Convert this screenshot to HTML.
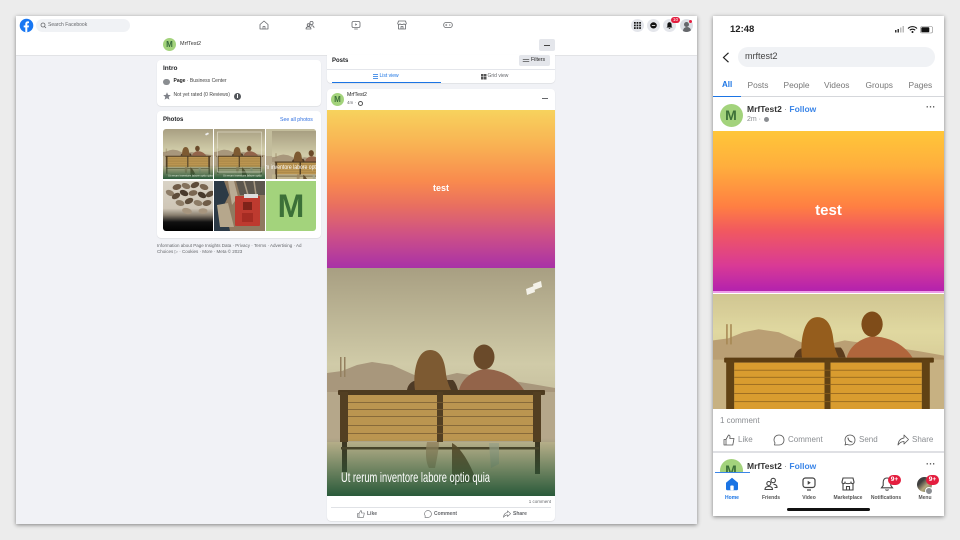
<!DOCTYPE html>
<html><head><meta charset="utf-8"><style>
html,body{margin:0;padding:0}
body{width:960px;height:540px;background:#ececec;position:relative;overflow:hidden;font-family:"Liberation Sans",sans-serif;color:#1c1e21}
#w{position:absolute;left:0;top:0;width:960px;height:540px;filter:blur(.3px)}
.a{position:absolute}
.t{position:absolute;white-space:nowrap;line-height:1}
.card{position:absolute;background:#fff;border-radius:4px;box-shadow:0 0.5px 1px rgba(0,0,0,.12)}
.c{position:absolute;border-radius:50%}
svg{position:absolute;display:block;overflow:visible}
.ic{fill:none;stroke:#65676b;stroke-width:1;stroke-linecap:round;stroke-linejoin:round}
.pic{stroke:#555;stroke-width:1.1}
.tab{position:absolute;white-space:nowrap;line-height:1;top:80.5px;font-size:8.4px;color:#777}
.act{position:absolute;white-space:nowrap;line-height:1;top:436px;font-size:8px;color:#8a8d91}
.dact{position:absolute;white-space:nowrap;line-height:1;top:511.5px;font-size:5px;color:#65676b;font-weight:bold}
.nav{position:absolute;width:40px;top:495.5px;font-size:5px;font-weight:bold;color:#555;text-align:center;line-height:1;white-space:nowrap}
</style></head><body><div id="w">
<svg width="0" height="0" style="position:absolute"><defs>
<linearGradient id="sky" x1="0" y1="0" x2="0" y2="1"><stop offset="0" stop-color="#a89f82"/><stop offset=".42" stop-color="#d0cba8"/><stop offset=".55" stop-color="#c8c1a0"/><stop offset="1" stop-color="#b3a67d"/></linearGradient>
<linearGradient id="grn" x1="0" y1="0" x2="0" y2="1"><stop offset="0" stop-color="#2a5a3a" stop-opacity="0"/><stop offset=".4" stop-color="#2a5a3a" stop-opacity=".4"/><stop offset="1" stop-color="#2a5a3a"/></linearGradient>
<symbol id="scene" viewBox="0 0 228 228" preserveAspectRatio="none">
<rect width="228" height="228" fill="url(#sky)"/>
<path d="M0 105L15 103L30 97L45 94L65 97L85 106L100 112L130 105L150 108L180 112L205 116L228 120V130H0Z" fill="#a8977c"/>
<rect x="13" y="89" width="1.5" height="20" fill="#94805f"/><rect x="17" y="89" width="1.5" height="20" fill="#94805f"/>
<rect y="124" width="228" height="50" fill="#b5a78a"/>
<rect y="174" width="228" height="54" fill="#c0b48e"/>
<path d="M80 122C81 116 85 113 90 112L126 112C129 115 130 119 131 122Z" fill="#4e3a26"/>
<path d="M88 122C86 110 88 82 103 82C115 82 118 95 119 106C120 113 122 118 124 122Z" fill="#7d5a32"/>
<path d="M132 122C135 110 146 103 157 101C172 101 188 108 197 122Z" fill="#93644a"/>
<ellipse cx="157" cy="89" rx="10.5" ry="12.5" fill="#6a4a2a"/>
<rect x="11" y="122" width="207" height="5" rx="1" fill="#4e3b20"/>
<rect x="13" y="124" width="8" height="50" fill="#533f22"/><rect x="110" y="124" width="6" height="50" fill="#533f22"/><rect x="206" y="124" width="8" height="50" fill="#533f22"/>
<rect x="21" y="127" width="89" height="46" fill="#bb9550"/><rect x="116" y="127" width="90" height="46" fill="#bb9550"/>
<g fill="#7a5e33" opacity=".85"><rect x="21" y="134" width="185" height=".9"/><rect x="21" y="141" width="185" height=".9"/><rect x="21" y="148" width="185" height=".9"/><rect x="21" y="157" width="185" height=".9"/><rect x="21" y="165" width="185" height=".9"/></g>
<rect x="15" y="174" width="5" height="30" fill="#3e3320"/><rect x="208" y="174" width="5" height="32" fill="#3e3320"/>
<rect x="14" y="179" width="198" height="2.5" fill="#4d3f26"/>
<path d="M100 174C98 185 99 195 102 200H108C110 190 112 180 112 174Z" fill="#9a8560" opacity=".8"/>
<path d="M125 175C135 180 145 200 150 214L125 216Z" fill="#5a4526" opacity=".9"/>
<path d="M162 175H172V196L164 200Z" fill="#a5a88e" opacity=".8"/>
</symbol>
</defs></svg>

<!-- Desktop window -->
<div class="a" style="left:16px;top:16px;width:681px;height:508px;background:#f1f2f6;box-shadow:0 1px 4px rgba(0,0,0,.45)"></div>
<div class="a" style="left:16px;top:16px;width:681px;height:20px;background:#fff"></div>
<div class="a" style="left:16px;top:35.500px;width:681px;height:.6px;background:#f0f0f0"></div>
<div class="a" style="left:16px;top:36px;width:681px;height:19px;background:#fff;border-bottom:.5px solid #e2e3e6"></div>

<svg style="left:19px;top:18px" width="15" height="15" viewBox="0 0 15 15"><circle cx="7.5" cy="7.5" r="6.8" fill="#1877f2"/><path d="M6.3 14.2V9.4H4.7V7.5H6.3V6C6.3 4.4 7.3 3.4 8.8 3.4C9.4 3.4 10 3.5 10 3.5V5.1H9.2C8.5 5.1 8.3 5.5 8.3 6V7.5H10L9.7 9.4H8.3V14.2Z" fill="#fff"/></svg>
<div class="a" style="left:36px;top:19px;width:94px;height:13px;border-radius:7px;background:#f0f2f5"></div>
<svg style="left:40px;top:22px" width="7" height="7" viewBox="0 0 7 7"><circle cx="3" cy="3" r="2" fill="none" stroke="#65676b" stroke-width=".8"/><path d="M4.5 4.5L6 6" stroke="#65676b" stroke-width=".8"/></svg>
<div class="t" style="left:48px;top:23px;font-size:5px;color:#65676b">Search Facebook</div>

<svg class="ic" style="left:259px;top:20px" width="10" height="10" viewBox="0 0 10 10"><path d="M1 4.5L5 1L9 4.5V9H1Z" stroke-width=".8"/><path d="M4 9V6.5H6V9" stroke-width=".7"/></svg>
<svg class="ic" style="left:305px;top:20px" width="10" height="10" viewBox="0 0 10 10"><circle cx="6.5" cy="3" r="1.6" stroke-width=".8"/><circle cx="3.5" cy="5" r="1.3" stroke-width=".8"/><path d="M1 9C1 7.5 2 6.8 3.5 6.8S6 7.5 6 9ZM6 6C7.5 5.5 9 6 9 7.7" stroke-width=".8"/></svg>
<svg class="ic" style="left:351px;top:20px" width="10" height="10" viewBox="0 0 10 10"><rect x="1" y="1.5" width="8" height="6" rx="1.4" stroke-width=".8"/><path d="M3.5 9H6.5" stroke-width=".8"/><path d="M4.3 3.2L6.2 4.5L4.3 5.8Z" fill="#65676b" stroke="none"/></svg>
<svg class="ic" style="left:397px;top:20px" width="10" height="10" viewBox="0 0 10 10"><path d="M1.5 1H8.5L9.3 3.5C9.3 4.6 7.5 4.8 7 3.8C6.5 4.8 3.5 4.8 3 3.8C2.5 4.8 .7 4.6 .7 3.5ZM1.5 5V9H8.5V5M4 9V6.5H6V9" stroke-width=".8"/></svg>
<svg class="ic" style="left:443px;top:20px" width="10" height="10" viewBox="0 0 10 10"><rect x=".7" y="2.5" width="8.6" height="5" rx="2.2" stroke-width=".8"/><path d="M2.3 5H4M3.15 4.2V5.8" stroke-width=".6"/><circle cx="6.8" cy="5" r=".6" fill="#65676b" stroke="none"/></svg>

<div class="c" style="left:631px;top:19px;width:13px;height:13px;background:#e4e6eb"></div>
<svg style="left:634px;top:22px" width="7" height="7" viewBox="0 0 7 7" fill="#111"><rect width="1.7" height="1.7"/><rect x="2.6" width="1.7" height="1.7"/><rect x="5.2" width="1.7" height="1.7"/><rect y="2.6" width="1.7" height="1.7"/><rect x="2.6" y="2.6" width="1.7" height="1.7"/><rect x="5.2" y="2.6" width="1.7" height="1.7"/><rect y="5.2" width="1.7" height="1.7"/><rect x="2.6" y="5.2" width="1.7" height="1.7"/><rect x="5.2" y="5.2" width="1.7" height="1.7"/></svg>
<div class="c" style="left:647px;top:19px;width:13px;height:13px;background:#e4e6eb"></div>
<svg style="left:650px;top:22px" width="7" height="7" viewBox="0 0 7 7"><ellipse cx="3.5" cy="3.4" rx="3.3" ry="3.1" fill="#111"/><path d="M1.8 3.5H5.2" stroke="#fff" stroke-width=".8" fill="none"/></svg>
<div class="c" style="left:663px;top:19px;width:13px;height:13px;background:#e4e6eb"></div>
<svg style="left:666px;top:22px" width="7" height="7" viewBox="0 0 7 7"><path d="M3.5 .3C5 .3 5.6 1.5 5.6 3V4.5L6.5 5.5H.5L1.4 4.5V3C1.4 1.5 2 .3 3.5 .3ZM2.7 6H4.3C4.3 7 2.7 7 2.7 6Z" fill="#111"/></svg>
<div class="a" style="left:671px;top:17px;width:9px;height:6px;border-radius:3px;background:#e41e3f;color:#fff;font-size:4.5px;line-height:6px;text-align:center">10</div>
<div class="c" style="left:680px;top:19px;width:13px;height:13px;background:#dcdfe4;overflow:hidden"><div class="c" style="left:4px;top:2.5px;width:5px;height:5px;background:#65676b"></div><div class="c" style="left:2.5px;top:7.5px;width:8px;height:8px;background:#65676b"></div></div>
<div class="c" style="left:688.5px;top:19.5px;width:3px;height:3px;background:#e41e3f"></div>

<div class="c" style="left:163px;top:38px;width:13px;height:13px;background:#a3d37c;color:#34693a;font-size:8px;font-weight:bold;line-height:13px;text-align:center">M</div>
<div class="t" style="left:180px;top:42px;font-size:5.5px;color:#333">MrfTest2</div>
<div class="a" style="left:539px;top:39px;width:16px;height:12px;border-radius:2px;background:#e4e6eb"></div>
<div class="a" style="left:544px;top:44.5px;width:6px;height:1px;background:#444"></div>

<!-- Intro -->
<div class="card" style="left:157px;top:60px;width:164px;height:46px"></div>
<div class="t" style="left:163px;top:66px;font-size:6.5px;font-weight:bold">Intro</div>
<div class="c" style="left:163px;top:78.5px;width:6.5px;height:6.5px;background:#8a8d91"></div>
<div class="t" style="left:173.500px;top:79px;font-size:5px;color:#444"><b style="color:#222">Page</b> · Business Center</div>
<svg style="left:162.5px;top:92px" width="8" height="8" viewBox="0 0 8 8"><path d="M4 .3L5.1 2.9L7.8 3.1L5.7 4.9L6.4 7.6L4 6.2L1.6 7.6L2.3 4.9L.2 3.1L2.9 2.9Z" fill="#7f8289"/></svg>
<div class="t" style="left:173.5px;top:93px;font-size:5px;color:#444">Not yet rated (0 Reviews)</div>
<div class="c" style="left:234px;top:92.5px;width:7px;height:7px;background:#54575c"></div><div class="a" style="left:237px;top:94px;width:1px;height:4px;background:#fff"></div>

<!-- Photos -->
<div class="card" style="left:157px;top:111px;width:164px;height:127px"></div>
<div class="t" style="left:163px;top:117px;font-size:6px;font-weight:bold">Photos</div>
<div class="t" style="left:280px;top:117.5px;font-size:5.2px;color:#2f6fe0">See all photos</div>
<div class="a" style="left:163px;top:129px;width:153px;height:102px;border-radius:3px;overflow:hidden;background:#fff">
 <svg style="left:0;top:0;overflow:hidden" width="50" height="50"><use href="#scene" width="50" height="50"/><rect y="36" width="50" height="14" fill="url(#grn)"/><path d="M42 5L45 3.500L46 5L43 6.500Z" fill="#eee"/><text x="5" y="47.500" font-size="2.800" fill="#e8efe0" font-family="Liberation Sans, sans-serif">Ut rerum inventore labore optio quia</text></svg>
 <svg style="left:51px;top:0;overflow:hidden" width="51" height="50"><use href="#scene" width="51" height="50"/><rect y="36" width="51" height="14" fill="url(#grn)"/><rect x="3.5" y="3" width="44" height="40" fill="none" stroke="#efeadb" stroke-width=".7" opacity=".75"/><text x="9" y="47.500" font-size="2.800" fill="#e8efe0" font-family="Liberation Sans, sans-serif">Ut rerum inventore labore optio</text></svg>
 <svg style="left:103px;top:0;overflow:hidden" width="50" height="50" viewBox="0 0 50 50"><rect width="50" height="50" fill="#b5a78a"/><rect width="50" height="27" fill="#c3bd9c"/><use href="#scene" x="6" y="2" width="57" height="57"/><text x="-1" y="40" font-size="6" fill="#fff" font-family="Liberation Sans, sans-serif" textLength="52" lengthAdjust="spacingAndGlyphs">m inventore labore opti</text></svg>
 <div class="a" style="left:0;top:52px;width:50px;height:50px;background:linear-gradient(#d9d3c6 0,#cfc6b6 55%,#8a8070 68%,#111 82%,#000)"></div>
 <svg style="left:0;top:52px;overflow:hidden" width="50" height="50" viewBox="0 0 50 50" fill="#5d4c3a"><ellipse cx="7" cy="12" rx="4.500" ry="2.800" transform="rotate(25 7 12)" fill="#8d7c66"/><ellipse cx="14" cy="6" rx="4.500" ry="2.800" transform="rotate(-15 14 6)" fill="#6f5c47"/><ellipse cx="23" cy="5" rx="4.500" ry="2.800" transform="rotate(20 23 5)" fill="#84725c"/><ellipse cx="32" cy="4" rx="4.500" ry="2.800" transform="rotate(-25 32 4)"/><ellipse cx="41" cy="6" rx="4.500" ry="2.800" transform="rotate(20 41 6)" fill="#7a6752"/><ellipse cx="47" cy="13" rx="4.500" ry="2.800" transform="rotate(-30 47 13)"/><ellipse cx="13" cy="15" rx="4.500" ry="2.800" transform="rotate(-30 13 15)"/><ellipse cx="21" cy="12" rx="4.500" ry="2.800" transform="rotate(25 21 12)" fill="#483a2c"/><ellipse cx="30" cy="12" rx="4.500" ry="2.800" transform="rotate(-10 30 12)" fill="#7a6752"/><ellipse cx="39" cy="14" rx="4.500" ry="2.800" transform="rotate(30 39 14)" fill="#483a2c"/><ellipse cx="17" cy="22" rx="4.500" ry="2.800" transform="rotate(15 17 22)" fill="#8d7c66"/><ellipse cx="26" cy="20" rx="4.500" ry="2.800" transform="rotate(-25 26 20)"/><ellipse cx="35" cy="22" rx="4.500" ry="2.800" transform="rotate(15 35 22)" fill="#8d7c66"/><ellipse cx="44" cy="22" rx="4.500" ry="2.800" transform="rotate(-15 44 22)" fill="#6f5c47"/><ellipse cx="24" cy="30" rx="5" ry="3" transform="rotate(15 24 30)" fill="#a6957e"/><ellipse cx="40" cy="30" rx="4.500" ry="2.800" fill="#a6957e"/></svg>
 <svg style="left:51px;top:52px;overflow:hidden" width="51" height="50" viewBox="0 0 51 50"><rect width="51" height="50" fill="#8f7a60"/><path d="M0 0H10L15 14L10 24L16 50H0Z" fill="#2c3a46"/><path d="M14 0H20L24 16L18 24Z" fill="#b9ab94"/><path d="M22 0H51V14H26Z" fill="#5c574e"/><path d="M3 24L14 22L20 46H6Z" fill="#b6a78c"/><path d="M30 0L34 14M40 0L42 14" stroke="#a89a83" stroke-width="1.500"/><rect x="21" y="15" width="25" height="30" rx="1" fill="#bd3a2f"/><rect x="30" y="13" width="14" height="4" fill="#ddd"/><rect x="29" y="21" width="9" height="8" fill="#7f2219"/><rect x="28" y="32" width="11" height="9" fill="#a52c23"/></svg>
 <div class="a" style="left:103px;top:52px;width:50px;height:50px;background:#a3d37c;color:#3c7038;font-size:32px;font-weight:bold;line-height:50px;text-align:center">M</div>
</div>
<div class="a" style="left:157px;top:243px;width:160px;font-size:4.5px;line-height:5.5px;color:#65676b">Information about Page Insights Data · Privacy · Terms · Advertising · Ad Choices ▷ · Cookies · More · Meta © 2023</div>

<!-- Posts card -->
<div class="card" style="left:327px;top:55px;width:228px;height:28px;border-radius:0 0 4px 4px"></div>
<div class="t" style="left:332px;top:57.5px;font-size:6px;font-weight:bold">Posts</div>
<div class="a" style="left:519px;top:55px;width:31px;height:11px;background:#e4e6eb;border-radius:2px"></div>
<svg class="ic" style="left:523px;top:58px;stroke:#333" width="6" height="5" viewBox="0 0 6 5"><path d="M0 1.3H6M0 3.7H6" stroke-width=".6"/></svg>
<div class="t" style="left:531px;top:57.5px;font-size:5.2px;color:#222">Filters</div>
<div class="a" style="left:327px;top:69px;width:228px;height:.7px;background:#e4e6eb"></div>
<svg style="left:373px;top:73.5px" width="5" height="5" viewBox="0 0 5 5" stroke="#1b74e4" stroke-width=".7"><path d="M0 .5H5M0 2.5H5M0 4.5H5"/></svg>
<div class="t" style="left:379.5px;top:73.5px;font-size:5px;color:#1b74e4">List view</div>
<div class="a" style="left:332px;top:82px;width:109px;height:1px;background:#1b74e4"></div>
<svg style="left:481px;top:73.5px" width="5.5" height="5.5" viewBox="0 0 5 5" fill="#555"><rect width="2.3" height="2.3"/><rect x="2.7" width="2.3" height="2.3"/><rect y="2.7" width="2.3" height="2.3"/><rect x="2.7" y="2.7" width="2.3" height="2.3"/></svg>
<div class="t" style="left:487.5px;top:73.5px;font-size:5px;color:#65676b">Grid view</div>

<!-- Post card -->
<div class="card" style="left:327px;top:89px;width:228px;height:432px"></div>
<div class="c" style="left:331px;top:92.5px;width:13px;height:13px;background:#a3d37c;color:#3c7038;font-size:8px;font-weight:bold;line-height:13px;text-align:center">M</div>
<div class="t" style="left:347px;top:93px;font-size:5.2px;color:#222">MrfTest2</div>
<div class="t" style="left:347px;top:100.5px;font-size:4.5px;color:#65676b">4m ·</div>
<div class="c" style="left:357.500px;top:100.5px;width:3px;height:3px;border:.7px solid #555"></div>
<div class="a" style="left:542px;top:98px;width:6px;height:1px;background:#65676b"></div>
<div class="a" style="left:327px;top:110px;width:228px;height:158px;background:linear-gradient(#f7d25d 0%,#f9b253 22%,#f98a4e 45%,#e9705f 60%,#cc4f88 80%,#a831a8 100%)"></div>
<div class="t" style="left:327px;width:228px;top:184px;font-size:9px;font-weight:bold;color:#fff;text-align:center">test</div>
<svg style="left:327px;top:268px;overflow:hidden" width="228" height="228" viewBox="0 0 228 228"><use href="#scene" width="228" height="228"/><rect y="170" width="228" height="58" fill="url(#grn)"/>
<path d="M206 16L214 13L215 19L207 22ZM199 21L207 18L208 24L200 27Z" fill="#f3f1e8"/>
<text x="14" y="214" font-size="14" fill="#fff" font-family="Liberation Sans Narrow, Liberation Sans, sans-serif" textLength="149" lengthAdjust="spacingAndGlyphs">Ut rerum inventore labore optio quia</text></svg>
<div class="t" style="right:409px;top:499.5px;font-size:4.5px;color:#65676b">1 comment</div>
<div class="a" style="left:331px;top:507px;width:220px;height:.6px;background:#e0e2e6"></div>
<svg class="ic" style="left:357px;top:510px" width="8" height="8" viewBox="0 0 8 8"><path d="M.5 3.5H2V7.3H.5ZM2 3.5L3.7 .6C4.7 .6 4.9 1.5 4.5 3H7.3L6.5 7.3H2" stroke-width=".6"/></svg>
<div class="dact" style="left:367px">Like</div>
<svg class="ic" style="left:424px;top:510px" width="8" height="8" viewBox="0 0 8 8"><path d="M4 .6C6 .6 7.4 2 7.4 4C7.4 6 6 7.4 4 7.4H1L1.2 5.8C.7 5.2.6 4.6.6 4C.6 2 2 .6 4 .6Z" stroke-width=".6"/></svg>
<div class="dact" style="left:434px">Comment</div>
<svg class="ic" style="left:503px;top:510px" width="8" height="8" viewBox="0 0 8 8"><path d="M4.5 .8L7.6 3.7L4.5 6.5V4.9C2.8 4.9 1.5 5.7.5 7.3C.7 4.5 2.2 2.8 4.5 2.5Z" stroke-width=".6"/></svg>
<div class="dact" style="left:513px">Share</div>

<!-- Phone -->
<div class="a" style="left:713px;top:16px;width:231px;height:500px;background:#fff;box-shadow:0 1px 4px rgba(0,0,0,.45)"></div>
<div class="t" style="left:730px;top:25px;font-size:9.5px;font-weight:bold;color:#222">12:48</div>
<svg style="left:895px;top:25px" width="46" height="9" viewBox="0 0 46 9"><rect x="0" y="5" width="1.5" height="2.5" fill="#333"/><rect x="2.5" y="4" width="1.5" height="3.5" fill="#333"/><rect x="5" y="2.5" width="1.5" height="5" fill="#bbb"/><rect x="7.5" y="1" width="1.5" height="6.5" fill="#bbb"/><path d="M13 3.5C15.5 1 19.5 1 22 3.5M14.8 5.2C16.3 3.9 18.700 3.9 20.2 5.2" stroke="#111" stroke-width="1.1" fill="none"/><circle cx="17.5" cy="7" r="1" fill="#111"/><rect x="25.500" y="1.5" width="12" height="6.5" rx="1.5" fill="none" stroke="#888" stroke-width=".6"/><rect x="26.3" y="2.3" width="8" height="4.9" rx=".8" fill="#111"/></svg>
<svg style="left:722px;top:52px" width="8" height="11" viewBox="0 0 8 11"><path d="M6.5 .8L1.5 5.5L6.5 10.2" fill="none" stroke="#222" stroke-width="1.2"/></svg>
<div class="a" style="left:738px;top:47px;width:197px;height:20px;border-radius:10px;background:#f0f2f5"></div>
<div class="t" style="left:745px;top:52px;font-size:9px;color:#444">mrftest2</div>
<div class="t" style="left:722px;top:80.5px;font-size:8px;font-weight:bold;color:#1b74e4">All</div>
<div class="tab" style="left:747.5px">Posts</div>
<div class="tab" style="left:783.5px">People</div>
<div class="tab" style="left:824px">Videos</div>
<div class="tab" style="left:865.5px">Groups</div>
<div class="tab" style="left:908.5px">Pages</div>
<div class="a" style="left:713px;top:96px;width:231px;height:1px;background:#d5d7db"></div>
<div class="a" style="left:713px;top:95.5px;width:28px;height:1.2px;background:#1b74e4"></div>
<div class="c" style="left:719.5px;top:103.5px;width:23px;height:23px;background:#a3d37c;color:#3c7038;font-size:14px;font-weight:bold;line-height:23px;text-align:center">M</div>
<div class="t" style="left:747px;top:105px;font-size:8.5px;font-weight:bold;color:#333">MrfTest2 <span style="color:#888;font-weight:normal">·</span> <span style="color:#3a85e8">Follow</span></div>
<div class="t" style="left:747px;top:116px;font-size:7px;color:#8a8d91">2m ·</div>
<div class="c" style="left:763.5px;top:117px;width:5px;height:5px;background:#8a8d91"></div>
<div class="t" style="left:926px;top:103px;font-size:9px;font-weight:bold;color:#555;letter-spacing:.2px">···</div>
<div class="a" style="left:713px;top:131px;width:231px;height:160px;background:linear-gradient(#ffc639 0%,#ffae3d 22%,#ff7f42 47%,#f1595f 62%,#d93a95 84%,#b322ae 100%)"></div>
<div class="a" style="left:713px;top:291px;width:231px;height:1.5px;background:#ee9be8"></div>
<div class="t" style="left:713px;width:231px;top:203px;font-size:15px;font-weight:bold;color:#fff;text-align:center">test</div>
<div class="a" style="left:713px;top:294px;width:231px;height:115px;overflow:hidden"><svg style="left:0;top:-60px;filter:saturate(1.5) brightness(1.06)" width="231" height="231"><use href="#scene" width="231" height="231"/></svg></div>
<div class="t" style="left:720px;top:417px;font-size:8px;color:#8a8d91">1 comment</div>
<svg class="ic pic" style="left:723px;top:434px" width="12" height="12" viewBox="0 0 12 12"><path d="M1 5.5H3V11H1ZM3 5.5L5.5 1C7 1 7.3 2.3 6.8 4.5H11L9.8 11H3" stroke-width=".8"/></svg>
<div class="act" style="left:738px">Like</div>
<svg class="ic pic" style="left:773px;top:434px" width="12" height="12" viewBox="0 0 12 12"><path d="M6 1C9 1 11 3 11 6C11 9 9 11 6 11H1.5L2 8.8C1.3 8 1 7 1 6C1 3 3 1 6 1Z" stroke-width=".8"/></svg>
<div class="act" style="left:788px">Comment</div>
<svg class="ic pic" style="left:844px;top:434px" width="12" height="12" viewBox="0 0 12 12"><path d="M6 1C9 1 11 3 11 6C11 9 9 11 6 11C5 11 4 10.7 3.3 10.3L1 11L1.7 8.7C1.3 8 1 7 1 6C1 3 3 1 6 1Z" stroke-width=".8"/><path d="M4 4C4.2 6 6 8 8 8" stroke-width="1.1"/></svg>
<div class="act" style="left:859px">Send</div>
<svg class="ic pic" style="left:897px;top:434px" width="12" height="12" viewBox="0 0 12 12"><path d="M7 1L11.5 5.5L7 10V7.5C4.5 7.5 2.5 8.7 1 11C1.3 7 3.5 4.500 7 4Z" stroke-width=".8"/></svg>
<div class="act" style="left:912px">Share</div>
<div class="a" style="left:713px;top:451px;width:231px;height:2px;background:#dfe0e4"></div>
<div class="a" style="left:719.5px;top:459px;width:23px;height:13px;overflow:hidden"><div class="c" style="left:0;top:0;width:23px;height:23px;background:#a3d37c;color:#3c7038;font-size:14px;font-weight:bold;line-height:23px;text-align:center">M</div></div>
<div class="t" style="left:747px;top:461.5px;font-size:8.5px;font-weight:bold;color:#333">MrfTest2 <span style="color:#888;font-weight:normal">·</span> <span style="color:#3a85e8">Follow</span></div>
<div class="t" style="left:926px;top:459.5px;font-size:9px;font-weight:bold;color:#555;letter-spacing:.2px">···</div>
<div class="a" style="left:713px;top:472px;width:231px;height:44px;background:#fff"></div>
<div class="a" style="left:715px;top:471.5px;width:35px;height:1.2px;background:#3a85e8"></div>
<svg style="left:725px;top:477px" width="14" height="14" viewBox="0 0 14 14"><path d="M7 .8L13 5.8V12C13 12.8 12.5 13.2 11.8 13.2H2.2C1.5 13.2 1 12.8 1 12V5.8Z" fill="#1b74e4"/><rect x="5.3" y="8.5" width="3.4" height="4.7" rx=".8" fill="#fff"/></svg>
<svg style="left:764px;top:477px" width="14" height="14" viewBox="0 0 14 14" fill="none" stroke="#444" stroke-width="1.1"><circle cx="9.2" cy="3.5" r="2.2"/><circle cx="4.8" cy="6.5" r="2"/><path d="M1 12.5C1 10.5 2.5 9.5 4.8 9.5S8.5 10.5 8.5 12.5Z"/><path d="M9.5 7.5C11.5 7.3 13 8.2 13 10.5H10.5"/></svg>
<svg style="left:802px;top:477px" width="14" height="14" viewBox="0 0 14 14" fill="none" stroke="#444" stroke-width="1.2"><rect x="1" y="1" width="12" height="9.5" rx="2.5"/><path d="M5 13H9"/><path d="M5.7 3.8L8.8 5.7L5.7 7.7Z" fill="#444" stroke="none"/></svg>
<svg style="left:841px;top:477px" width="14" height="14" viewBox="0 0 14 14" fill="none" stroke="#444" stroke-width="1.1"><path d="M2 1H12L13 5C13 7 10.5 7 10 5.5C9.5 7 4.5 7 4 5.500C3.5 7 1 7 1 5Z"/><path d="M2 7V13H12V7M5.5 13V9.5H8.5V13"/></svg>
<svg style="left:880px;top:477px" width="14" height="14" viewBox="0 0 14 14" fill="none" stroke="#444" stroke-width="1.1"><path d="M7 1C9.8 1 10.8 3 10.8 5.5V8.5L12.5 10.8H1.5L3.2 8.5V5.5C3.2 3 4.2 1 7 1ZM5.5 12.5C6 13.5 8 13.5 8.5 12.5"/></svg>
<div class="a" style="left:888px;top:475px;width:13px;height:10px;border-radius:5px;background:#e41e3f;color:#fff;font-size:6.5px;font-weight:bold;line-height:10px;text-align:center">9+</div>
<div class="c" style="left:917px;top:477px;width:15px;height:15px;background:linear-gradient(135deg,#3f3f3f 30%,#b3a67d 60%,#5c6b54)"></div>
<div class="c" style="left:925px;top:487px;width:6px;height:6px;background:#8a8d91;border:.7px solid #fff"></div>
<div class="a" style="left:926px;top:475px;width:13px;height:10px;border-radius:5px;background:#e41e3f;color:#fff;font-size:6.5px;font-weight:bold;line-height:10px;text-align:center">9+</div>
<div class="nav" style="left:712px;color:#1b74e4">Home</div>
<div class="nav" style="left:751px">Friends</div>
<div class="nav" style="left:789px">Video</div>
<div class="nav" style="left:828px">Marketplace</div>
<div class="nav" style="left:866px">Notifications</div>
<div class="nav" style="left:905px">Menu</div>
<div class="a" style="left:787px;top:508px;width:83px;height:3px;border-radius:2px;background:#111"></div>
</div></body></html>
